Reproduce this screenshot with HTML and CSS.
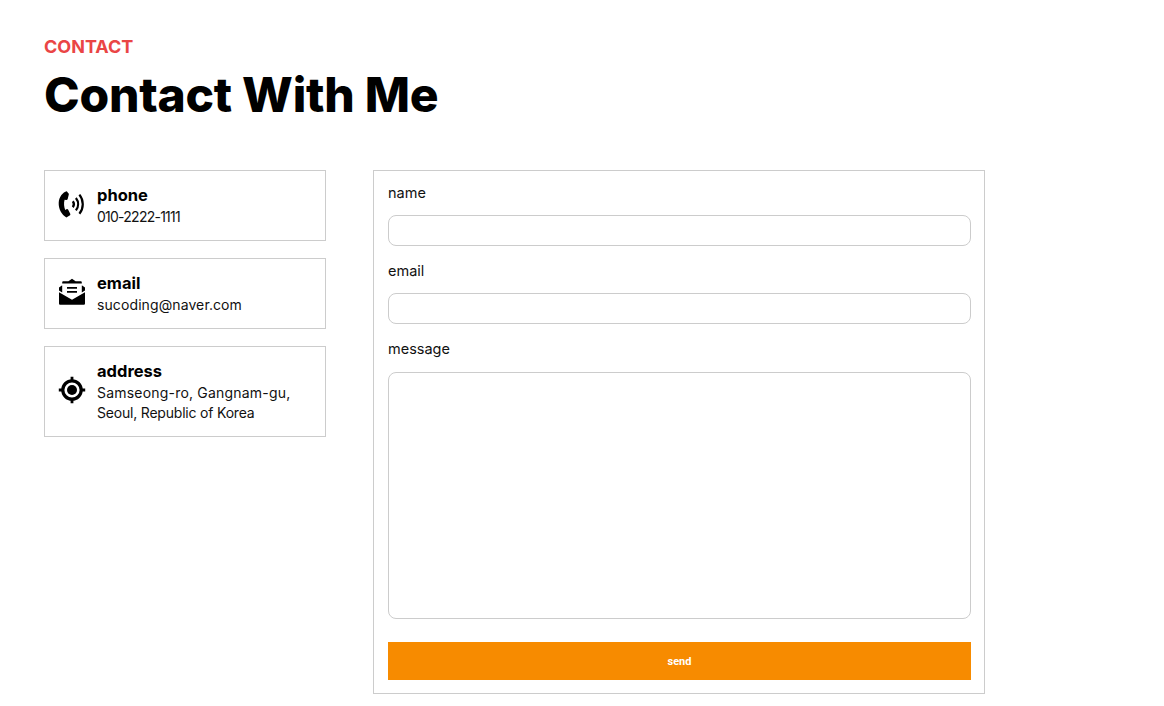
FILE: index.html
```html
<!DOCTYPE html>
<html lang="en">
<head>
<meta charset="utf-8">
<title>Contact</title>
<link rel="stylesheet" href="styles.css">
</head>
<body>
<section class="contact">
  <p class="eyebrow">CONTACT</p>
  <h1 class="title">Contact With Me</h1>
  <div class="columns">
    <ul class="cards">
      <li class="card">
        <svg class="icon" viewBox="0 0 28 28"><path d="M8.8 1.2 C5 2.2 1 6.4 .7 12.8 C.4 19 3.8 25 8.4 27.4 L11.6 25.6 C12.4 25.2 12.5 24.4 12.2 23.8 L10.2 19.8 C9.8 19.1 9.1 18.9 8.5 19.3 L7.2 20 C6 17.2 5.6 12.8 6.6 9.8 L8.2 10.1 C8.9 10.2 9.5 9.8 9.7 9.1 L10.8 4.6 C11 3.9 10.7 3.3 10.1 2.9 Z"/><path class="wave" d="M14.8 11.2 C16.2 13 16.2 15.4 14.8 17.2"/><path class="wave" d="M17.9 8 C20.8 11.7 20.8 16.7 17.9 20.4"/><path class="wave" d="M21.4 4.6 C25.9 10.2 25.9 18.2 21.4 23.8"/></svg>
        <div class="card-text">
          <h2 class="card-title">phone</h2>
          <p class="card-value card-value-digits">010-2222-1111</p>
        </div>
      </li>
      <li class="card">
        <svg class="icon" viewBox="0 0 28 28"><path fill-rule="evenodd" d="M14 .8 L17.6 3.2 H22.6 C23.3 3.2 23.8 3.7 23.8 4.4 V7.2 L27 9.6 V12.6 L23.8 14.5 V5.4 H4.2 V14.5 L1 12.6 V9.6 L4.2 7.2 V4.4 C4.2 3.7 4.7 3.2 5.4 3.2 H10.4 Z"/><path d="M1 14.2 L14 21.8 L27 14.2 V25.4 C27 26.2 26.4 26.8 25.6 26.8 H2.4 C1.6 26.8 1 26.2 1 25.4 Z"/><path d="M9 9 H19 V10.8 H9 Z M9 13 H19 V14.8 H9 Z"/></svg>
        <div class="card-text">
          <h2 class="card-title">email</h2>
          <p class="card-value">sucoding@naver.com</p>
        </div>
      </li>
      <li class="card">
        <svg class="icon" viewBox="0 0 28 28"><circle class="ring" cx="14" cy="14" r="9.2"/><circle cx="14" cy="14" r="5"/><path d="M12.6 .8 H15.4 V5 H12.6 Z M12.6 23 H15.4 V27.2 H12.6 Z M.8 12.6 H5 V15.4 H.8 Z M23 12.6 H27.2 V15.4 H23 Z"/></svg>
        <div class="card-text">
          <h2 class="card-title">address</h2>
          <p class="card-value"><span class="line-wide">Samseong-ro, Gangnam-gu,</span><br><span class="line-tight">Seoul, Republic of Korea</span></p>
        </div>
      </li>
    </ul>
    <form class="form">
      <label class="label" for="name">name</label>
      <input class="input" id="name" type="text">
      <label class="label" for="email">email</label>
      <input class="input" id="email" type="text">
      <label class="label label-message" for="message">message</label>
      <textarea class="input textarea" id="message"></textarea>
      <button class="send" type="button">send</button>
    </form>
  </div>
</section>
</body>
</html>
```
FILE: styles.css
```css
* { box-sizing: border-box; }
html, body { margin: 0; padding: 0; background: #fff; }
body { font-family: "Inter", "Liberation Sans", sans-serif; color: #000; overflow: hidden; }
.contact { padding: 36px 44px 0; }
.eyebrow { margin: 0; font-size: 18px; line-height: 22px; font-weight: 700; color: #ea4545; }
.title { margin: 5px 0 0; font-size: 48px; line-height: 64px; font-weight: 800; letter-spacing: -0.25px; }
.columns { display: flex; gap: 47px; align-items: flex-start; margin-top: 43px; }
.cards { list-style: none; margin: 0; padding: 0; width: 282px; display: flex; flex-direction: column; gap: 17px; }
.card { display: flex; align-items: center; gap: 11px; border: 1px solid #ccc; padding: 12.5px 13px 13.5px; min-height: 71px; }
.icon { width: 28px; height: 28px; flex: none; fill: #000; margin-bottom: 2px; }
.wave { fill: none; stroke: #000; stroke-width: 2.2; }
.ring { fill: none; stroke: #000; stroke-width: 3.2; }
.card-title { margin: 0; font-size: 16.5px; line-height: 22px; font-weight: 700; }
.card-value { margin: 1px 0 0; font-size: 14px; line-height: 20px; font-weight: 400; color: #111; letter-spacing: 0.1px; }
.card-value-digits { letter-spacing: -0.75px; }
.line-wide { letter-spacing: 0.2px; }
.line-tight { letter-spacing: -0.2px; }
.form { width: 612px; height: 524px; border: 1px solid #ccc; padding: 10px 13px 13px 14px; display: flex; flex-direction: column; }
.label { font-size: 14.5px; line-height: 24px; margin-bottom: 10px; color: #111; }
.input { display: block; width: 100%; height: 31px; margin: 0 0 13px; border: 1px solid #ccc; border-radius: 8px; background: #fff; padding: 0 8px; }
.label-message { margin-bottom: 11px; }
.textarea { height: 247px; margin-bottom: 23px; resize: none; }
.send { height: 38px; border: 0; background: #f78b00; color: #fff; font-family: "Roboto", sans-serif; font-size: 11px; font-weight: 700; padding: 0; }
```
